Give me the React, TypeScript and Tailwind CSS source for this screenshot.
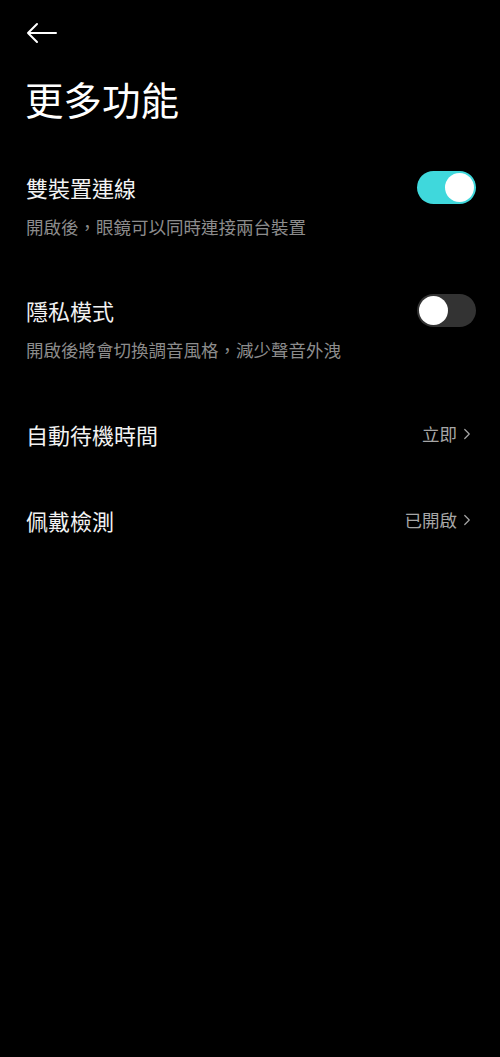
import { ChevronRight } from "lucide-react"

const font = { fontFamily: '"Noto Sans CJK TC", "Noto Sans", sans-serif' }

const Toggle = ({ on }: { on: boolean }) => (
  <div className={`w-[59px] h-[33px] rounded-full flex items-center px-[2px] shrink-0 ${on ? "bg-[#3fd8dc] justify-end" : "bg-[#333333] justify-start"}`}>
    <div className="w-[29px] h-[29px] rounded-full bg-white" />
  </div>
)

const SwitchRow = ({ title, desc, on }: { title: string; desc: string; on: boolean }) => (
  <div className="flex flex-col">
    <div className="flex items-center justify-between h-[33px]">
      <span className="text-[22px] text-[#f2f2f2]">{title}</span>
      <Toggle on={on} />
    </div>
    <span className="text-[17.5px] text-[#8c8c8c] mt-[10px] leading-[26px]">{desc}</span>
  </div>
)

const LinkRow = ({ title, value }: { title: string; value: string }) => (
  <div className="flex items-center justify-between h-[40px]">
    <span className="text-[22px] text-[#f2f2f2]">{title}</span>
    <div className="flex items-center text-[17.5px] text-[#a6a6a6] mr-[4px]">
      <span>{value}</span>
      <ChevronRight size={18} strokeWidth={1.6} className="ml-[1px] -mr-[4px]" />
    </div>
  </div>
)

export default function App() {
  return (
    <div className="w-[500px] h-[1057px] bg-black pl-[26px] pr-[24px]" style={font}>
      <div className="pt-[22px] h-[50px]">
        <svg width="32" height="22" viewBox="0 0 32 22" fill="none" stroke="#ffffff" strokeWidth="2" strokeLinecap="round" strokeLinejoin="round">
          <path d="M2 11 H30 M11 2 L2 11 L11 20" />
        </svg>
      </div>
      <h1 className="text-[38.5px] text-white leading-[50px] mt-[23px] -ml-[1px]">更多功能</h1>
      <div className="mt-[48px] flex flex-col">
        <SwitchRow title="雙裝置連線" desc="開啟後，眼鏡可以同時連接兩台裝置" on={true} />
        <div className="h-[54px]" />
        <SwitchRow title="隱私模式" desc="開啟後將會切換調音風格，減少聲音外洩" on={false} />
        <div className="h-[51px]" />
        <LinkRow title="自動待機時間" value="立即" />
        <div className="h-[46px]" />
        <LinkRow title="佩戴檢測" value="已開啟" />
      </div>
    </div>
  )
}
